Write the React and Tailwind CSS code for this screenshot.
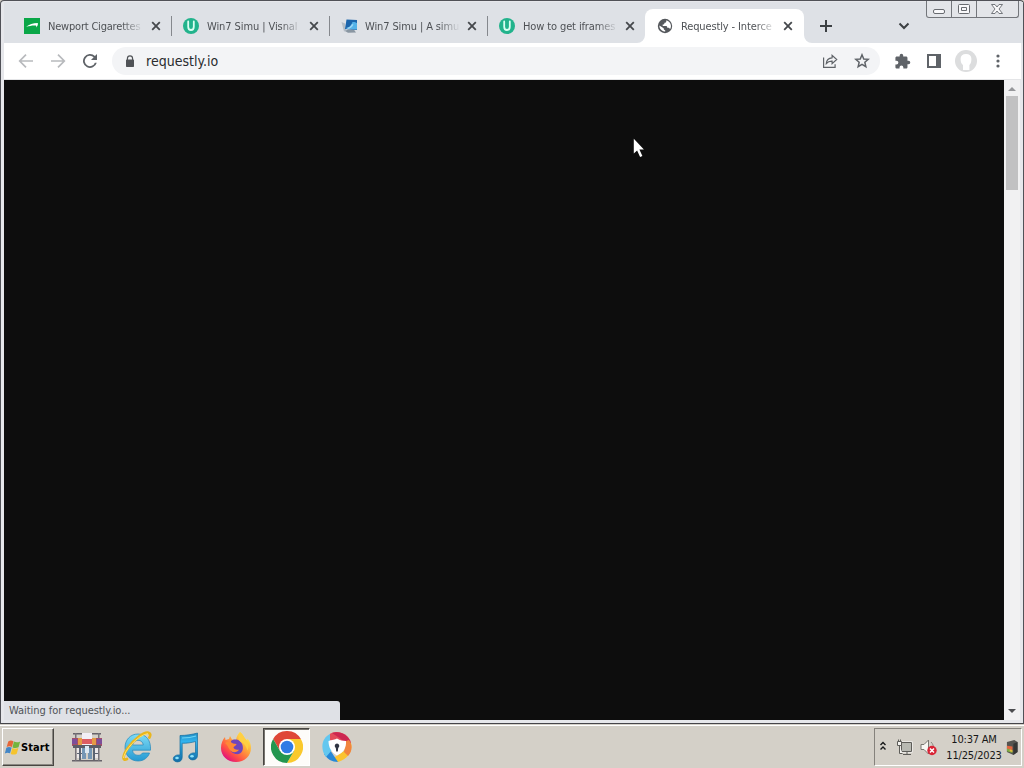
import React from 'react';

const tabs = [
  { title: 'Newport Cigarettes', icon: NewportIcon, tracking: 'tracking-[-0.2px]' },
  { title: 'Win7 Simu | Visnal', icon: UptodownIcon, tracking: 'tracking-[-0.09px]' },
  { title: 'Win7 Simu | A simu', icon: SimuIcon, tracking: 'tracking-[-0.12px]' },
  { title: 'How to get iframes', icon: UptodownIcon, tracking: 'tracking-[-0.12px]' },
  { title: 'Requestly - Interce', icon: GlobeIcon, tracking: 'tracking-[-0.13px]', active: true },
];

function NewportIcon() {
  return (
    <svg width="16" height="16" viewBox="0 0 16 16">
      <path fill="#0aa748" d="M0 0h16v16H0z" />
      <path fill="#fff" d="M2.200 8.800C5 6.600 9 5.100 13.800 5.100c.3 1.300-.1 3-1.600 4.300.2-1.300.1-1.900-.7-1.900C8.500 7.200 5.500 8 2.200 8.800z" />
    </svg>
  );
}

function UptodownIcon() {
  return (
    <svg width="16" height="16" viewBox="0 0 16 16">
      <circle cx="8" cy="8" r="8" fill="#22b38c" />
      <path d="M5.200 3.500v5.200a2.800 3.300 0 0 0 5.600 0V3.500" fill="none" stroke="#d9fff2" strokeWidth="1.800" strokeLinecap="round" />
    </svg>
  );
}

function SimuIcon() {
  return (
    <svg width="16" height="16" viewBox="0 0 16 16">
      <path fill="#b4bdc6" d="M.5 4l3.500 1.500L5.500 13l-2.500.5z" />
      <path fill="#8996a2" d="M7 11.500l6 .2 2 2.800-8 .2-3-1.700z" />
      <path fill="#1b65ac" d="M5.500 1.500L16 2v10L4 11z" />
      <path fill="#54b2e8" d="M11.500 4c2-.3 3 .3 4.500 1v6.500L5 10.500c3-.5 5-2.500 6.500-6.500z" />
      <path fill="#9bd7f5" d="M5 10c3-.3 4.800-2 6-4l1.500.5c-1.200 2.500-3 4-5 4.400z" />
    </svg>
  );
}

function GlobeIcon() {
  return (
    <svg width="16" height="16" viewBox="0 0 16 16">
      <circle cx="8" cy="8" r="7.200" fill="#55585c" />
      <path fill="#fff" d="M9 2.500c.8 1.500-.3 2-1.500 2.200-.2 1.500-.5 1.700-1.800 1.800v1.400h3.600c.8.200 1 .9.900 1.800h1.400c.9.200 1.100.8 1.400 1.500A5.600 5.600 0 0 0 9 2.500zM2.400 7.500c-.2 3.500 2.600 6.100 5.800 6.100v-1.400c-1.300-.2-1.600-.8-1.500-2z" />
    </svg>
  );
}

function CloseIcon() {
  return (
    <svg width="10" height="10" viewBox="0 0 10 10">
      <path d="M1.200 1.200l7.600 7.600M8.800 1.200L1.200 8.800" stroke="#45484c" strokeWidth="1.800" />
    </svg>
  );
}

function Tab({ title, icon: Icon, tracking, active, divider, first }) {
  return (
    <div className={`relative flex h-[34px] shrink-0 items-center ${first ? 'pl-[11px]' : 'pl-3'} ${active ? 'w-[159px] rounded-t-lg bg-white' : 'w-[158px]'}`}>
      <Icon />
      <div className={`ml-2 mt-[2px] h-[18px] w-[94px] shrink-0 whitespace-nowrap text-[11px] leading-[18px] text-[#4e5155] ${tracking} [mask-image:linear-gradient(to_right,black_74px,transparent_95px)]`}>
        {title}
      </div>
      <div className={first ? 'ml-[9px]' : 'ml-2'}><CloseIcon /></div>
      {divider && <div className="absolute -right-px top-[7px] h-5 w-px bg-[#85888d]" />}
      {active && (
        <>
          <svg className="absolute bottom-0 -left-2" width="8" height="8"><path d="M8 0v8H0a8 8 0 0 0 8-8z" fill="#fff" /></svg>
          <svg className="absolute bottom-0 -right-2" width="8" height="8"><path d="M0 0v8h8a8 8 0 0 1-8-8z" fill="#fff" /></svg>
        </>
      )}
    </div>
  );
}

function WindowControls() {
  return (
    <div className="absolute right-[4px] top-0 flex h-[17px] w-[93px] rounded-b-[3px] border border-t-0 border-[#73767b] bg-[#e3e5e9] text-[#686b70]">
      <div className="w-[25px] border-r border-[#73767b]">
        <svg width="25" height="16" fill="none" stroke="currentColor"><rect x="6.500" y="8.500" width="11" height="4" rx="1.500" fill="#f8f8fa" /></svg>
      </div>
      <div className="w-[25px] border-r border-[#73767b]">
        <svg width="25" height="16" fill="none" stroke="currentColor"><rect x="6.500" y="3.500" width="11" height="9" rx="1" fill="#f8f8fa" /><path d="M9.500 6.500h5v3h-5z" /></svg>
      </div>
      <svg width="41" height="16" fill="none" stroke="currentColor"><path d="M14.500 3.500h3.500l2 2.500 2-2.500h3.500l-3.500 4.500 3.500 4.500H22l-2-2.500-2 2.500h-3.500L18 8z" fill="#f8f8fa" strokeWidth="0.900" /></svg>
    </div>
  );
}

function TabStrip() {
  return (
    <div className="flex h-[41px] shrink-0 bg-[#dee1e6] pl-[9px] pt-[7px]">
      {tabs.map((tab, i) => <Tab key={i} {...tab} first={i === 0} divider={i < 3} />)}
      <svg width="14" height="14" viewBox="0 0 14 14" className="ml-[15px] mt-[10px]">
        <path d="M7 1v12M1 7h12" stroke="#3c4043" strokeWidth="2" />
      </svg>
      <svg width="12" height="12" viewBox="0 0 12 12" className="ml-[65px] mt-[11px]">
        <path d="M1.500 3.500L6 8l4.500-4.500" fill="none" stroke="#3c4043" strokeWidth="2" />
      </svg>
    </div>
  );
}

function Toolbar() {
  return (
    <div className="flex h-[37px] shrink-0 items-center border-b border-[#e4e5e7] bg-white pl-[14px] text-[#5f6368]">
      <svg width="16" height="16" viewBox="0 0 16 16" fill="none" stroke="#b8babd" strokeWidth="1.700"><path d="M15 8H2M8 1.700L1.700 8 8 14.300" /></svg>
      <svg width="16" height="16" viewBox="0 0 16 16" fill="none" stroke="#b8babd" strokeWidth="1.700" className="ml-4"><path d="M1 8h13M8 1.700L14.300 8 8 14.300" /></svg>
      <svg width="16" height="16" viewBox="0 0 16 16" fill="currentColor" className="ml-4"><path d="M12.950 3.050A7 7 0 1 0 14.760 9.800h-1.900a5.200 5.200 0 1 1-1.190-5.470L9 7h6V1z" /></svg>
      <div className="ml-[14px] flex h-7 w-[768px] items-center rounded-full bg-[#f3f4f6] pl-[14px]">
        <svg width="8" height="12" viewBox="0 0 10 13" preserveAspectRatio="none"><path fill="#505357" d="M1 5V4a4 3.700 0 0 1 8 0v1h.2a.8.800 0 0 1 .8.800v6.400a.8.800 0 0 1-.8.800H.8a.8.800 0 0 1-.8-.8V5.800A.8.800 0 0 1 .8 5zm1.500 0h5V4a2.500 2.300 0 0 0-5 0z" /></svg>
        <span className="ml-3 w-[673px] text-[14px] leading-5 tracking-[0.02px] text-[#292b2e]">requestly.io</span>
        <svg width="16" height="16" viewBox="0 0 16 16" fill="none" stroke="currentColor" strokeWidth="1.200" className="ml-[3px]"><path d="M1.600 4.500v9.900h11.500v-3.200M4.300 10.500c.2-3.500 2.100-5.500 5.800-5.700V2.300l4.600 4.200-4.600 4.200V8.100c-2.500-.1-4.400.7-5.800 2.400z" /></svg>
        <svg width="16" height="16" viewBox="0 0 16 16" fill="none" stroke="currentColor" strokeWidth="1.500" className="ml-4"><path d="M8 1.800l1.750 4.150 4.500.4-3.400 2.950 1 4.400L8 11.350 4.150 13.700l1-4.400-3.400-2.950 4.500-.4z" /></svg>
      </div>
      <svg width="17" height="17" viewBox="0 0 24 24" fill="currentColor" className="ml-[14px]"><path d="M20.500 11H19V7c0-1.100-.9-2-2-2h-4V3.500a2.500 2.500 0 0 0-5 0V5H4c-1.100 0-2 .9-2 2v3.800h1.500a2.700 2.700 0 0 1 0 5.400H2V20c0 1.100.9 2 2 2h3.800v-1.500a2.700 2.700 0 0 1 5.400 0V22H17c1.100 0 2-.9 2-2v-4h1.500a2.500 2.500 0 0 0 0-5z" /></svg>
      <svg width="14" height="14" viewBox="0 0 14 14" className="ml-4"><path fill="currentColor" fillRule="evenodd" d="M0 0h14v14H0zM2 2v10h7V2z" /></svg>
      <svg width="22" height="22" viewBox="0 0 22 22" className="ml-[14px]"><circle cx="11" cy="11" r="11" fill="#dcddde" /><path d="M11 4c3.400 0 5.400 1.800 5.400 4.800 0 3.200-.7 5.200-2 6.200v5H8v-5c-1.600-1-2.400-3-2.400-6.200C5.600 5.800 7.600 4 11 4z" fill="#fff" /></svg>
      <svg width="4" height="14" viewBox="0 0 4 14" fill="currentColor" className="ml-[19px]"><circle cx="2" cy="2" r="1.600" /><circle cx="2" cy="7" r="1.600" /><circle cx="2" cy="12" r="1.600" /></svg>
    </div>
  );
}

function Page() {
  return (
    <div className="flex h-[640px] shrink-0">
      <div className="relative flex w-[1000px] items-end bg-[#0d0d0d]">
        <div className="flex h-[19px] w-[336px] items-center rounded-tr-[3px] bg-[#dfe1e6] pl-[5px] pt-[2px] text-[11px] tracking-[-0.05px] text-[#505357]">
          Waiting for requestly.io...
        </div>
        <svg width="13" height="21" viewBox="0 0 13 21" className="absolute left-[629px] top-[58px]">
          <path fill="#fff" d="M.8.800v14.700l3.300-3.100 3 6.600 2.300-1-3-6.400h4.500z" />
        </svg>
      </div>
      <div className="flex w-4 flex-col items-center bg-[#f1f1f2]">
        <svg width="16" height="16"><path d="M4 11l4-4 4 4z" fill="#96979a" /></svg>
        <div className="h-[94px] w-3 bg-[#c1c1c2]" />
        <svg width="16" height="16" className="mt-auto"><path d="M4 5h8l-4 4z" fill="#4c4d50" /></svg>
      </div>
    </div>
  );
}

function StartButton() {
  return (
    <button className="flex h-[38px] w-[52px] items-center border border-b-[#484642] border-l-white border-r-[#484642] border-t-white bg-[#d4d0c8] pl-px shadow-[inset_-1px_-1px_#8b8882]">
      <svg width="17" height="17" viewBox="0 0 16 16">
        <path fill="#e56638" d="M4 2.300C5.700 1 7.300 1.200 8.900 2.100L7.500 7.500C5.800 6.600 4.300 6.500 2.500 7.600z" />
        <path fill="#73b43d" d="M9.300 2.400c2 .9 3.600 1 5.900-.1l-1.500 5.500c-2 1-3.700 1-5.700.1z" />
        <path fill="#4386c6" d="M2.200 8.200c1.800-1 3.300-.9 5-.1l-1.500 5.400C4 12.700 2.600 12.500.8 13.600z" />
        <path fill="#f5c42e" d="M7.800 8.500c2 .9 3.600.9 5.700-.1L12 13.900c-2 1.100-3.700 1-5.700.1z" />
      </svg>
      <span className="mt-[2px] text-[11px] font-bold tracking-[0.1px] text-black">Start</span>
    </button>
  );
}

function MarketIcon() {
  return (
    <svg width="32" height="32" viewBox="0 0 32 32">
      <path fill="#67636a" d="M2 2h28v1.500H2zM1 29h30v1.500H1z" />
      <path fill="#77737a" d="M4 2h1.500v28H4zM27 2h1.500v28H27z" />
      <path fill="#a34e68" d="M1 7h10v8H1zM21 7h10v8H21z" />
      <path fill="#7d4e9a" d="M1 8h5v5H1zM26 8h5v5h-5z" />
      <path fill="#e49a46" d="M7 7h4v7H7zM21 7h4v7h-4z" />
      <path fill="#f2eff6" d="M11 2h10v12H11z" />
      <path fill="#dc5c63" d="M11 8h10v5H11z" />
      <path fill="#5b5c68" d="M2 14h28v3H2z" />
      <path fill="#ece8e9" d="M6 17h5v10H6zM22 17h5v10h-5z" />
      <path fill="#7596b5" d="M11 17h4v11h-4zM17 17h4v11h-4z" />
      <path fill="#dce8f3" d="M14 15h4v7h-4z" />
      <path fill="#5c6472" d="M8 17h2v12H8zM22 17h2v12h-2zM6 22h5v1H6zM22 22h5v1h-5z" />
    </svg>
  );
}

function ExplorerIcon() {
  return (
    <svg width="32" height="32" viewBox="0 0 32 32">
      <defs>
        <linearGradient id="ie" x2="0" y2="1"><stop stopColor="#7edcf6" /><stop offset="1" stopColor="#2599d2" /></linearGradient>
      </defs>
      <path fill="url(#ie)" stroke="#2388bc" strokeWidth=".7" d="M17 3C9.500 3 4 8.800 4 16.500S9.500 30 17 30c5.700 0 10-3.300 11.500-8h-7c-.9 1.600-2.500 2.300-4.500 2.300-3.200 0-5.300-2-5.500-5.100h18C30.200 9.700 25.300 3 17 3zm-5.400 11c.5-2.900 2.600-4.700 5.400-4.700s4.900 1.700 5.300 4.700z" />
      <path fill="none" stroke="#e9b61d" strokeWidth="2.700" strokeLinecap="round" d="M6 28c-5 2.500-4.500-3 .5-10.500C13 8 24-.5 28.500 2.300c1 .8.700 2.800-.1 4.200" />
      <path fill="none" stroke="#ffe36a" strokeWidth="1" d="M2.600 27C3 20 16 4.500 27 2.500" />
    </svg>
  );
}

function MusicIcon() {
  return (
    <svg width="28" height="32" viewBox="0 0 28 32">
      <defs>
        <linearGradient id="note" x2="0" y2="1"><stop stopColor="#248dc2" /><stop offset=".3" stopColor="#32b4ef" /><stop offset="1" stopColor="#126ba5" /></linearGradient>
      </defs>
      <path fill="url(#note)" stroke="#166e9f" strokeWidth=".7" d="M8 4.500C14 4.500 20 3.500 25.500 2v22.200c0 3-2 4.700-4.800 4.700-2.300 0-4-1.300-4-3.200 0-2.500 3.200-4.300 6.800-3.700V10.500c-4.300 1.200-8.500 1.800-13.300 1.800v13.900c0 3-2 4.700-4.700 4.700-2.400 0-4.200-1.300-4.200-3.200 0-2.500 3.100-4.300 6.700-3.700z" />
      <path d="M10 7c5 0 10-.6 14-2" stroke="#70d5f4" strokeWidth="1.200" fill="none" />
      <ellipse cx="5" cy="27" rx="1.800" ry="1.200" fill="#8be3fb" /><ellipse cx="20" cy="25.200" rx="1.800" ry="1.200" fill="#8be3fb" />
    </svg>
  );
}

function FirefoxIcon() {
  return (
    <svg width="32" height="32" viewBox="0 0 32 32">
      <defs>
        <linearGradient id="fox" x1=".85" y1=".1" x2=".2" y2=".9"><stop stopColor="#fff04c" /><stop offset=".4" stopColor="#ffa03b" /><stop offset=".75" stopColor="#ff5045" /><stop offset="1" stopColor="#e31578" /></linearGradient>
      </defs>
      <path fill="url(#fox)" d="M20 1c2.500 2 3.500 4 5 6.500 1 .7 1.500 1.200 2 2l.5-2C30 10.500 31 13.500 31 17c0 8-6.500 14-15 14S1 25 1 17c0-4.500 1.500-8 4-11l.5 3L9 8l1-3 2 3.500 4 .5C16.500 5.500 18 3 20 1z" />
      <path fill="#7046bb" d="M11 10c4-3 10-1 11.500 4 1.700 6-2 10-7 9-4-.8-6-3.500-5-7z" />
      <path fill="#ff8936" d="M5 12c3-2 5.500-1.500 8 .5l3.500.5c0 1.800-2.200 2-3 3.200 0 2 3 3 5.500 2.300-1.500 3-5.700 3.500-8 1.500C8.500 18 8.500 15 5 12z" />
      <path fill="#ffcf42" d="M20 1c2.500 2 3.500 4 5 6.500 3 3 4.500 7.500 2.500 12-1.500-4.500-3-7-6.500-8.500-3-2-3-6-1-10z" />
    </svg>
  );
}

function ChromeIcon() {
  return (
    <svg width="32" height="32" viewBox="0 0 32 32">
      <path fill="#df4737" d="M2.140 8A16 16 0 0 1 29.860 8H16l-6.930 12z" />
      <path fill="#fac92c" d="M29.860 8A16 16 0 0 1 16 32l6.930-12L16 8z" />
      <path fill="#23964f" d="M2.140 8A16 16 0 0 0 16 32l6.930-12H9.070z" />
      <circle cx="16" cy="16" r="8" fill="#fff" />
      <circle cx="16" cy="16" r="6.300" fill="#2f7be5" />
    </svg>
  );
}

function LockBrowserIcon() {
  return (
    <svg width="30" height="30" viewBox="0 0 30 30">
      <path fill="#e34b5a" d="M8 1.700A15 15 0 0 1 28.500 9L22 13 7 8z" />
      <path fill="#cc2651" d="M10 1c8-2.500 16 1.500 19 9.500l-3 5L19 7z" />
      <path fill="#fac331" d="M29 11c2 7-2 16-13 19l-6-3 12-8 4-9z" />
      <path fill="#f1843e" d="M27 8c4 5 3 12-1 16l-4-4 2-11z" />
      <path fill="#2588d8" d="M2 22c3 5 8 8 14 8L8 18z" />
      <path fill="#63c7ef" d="M8 2C-.5 6-2 17 4 25l6-7-2-10z" />
      <path fill="#fff" d="M6.500 9C10 8 13 7.500 15 6.500c3 2 6 2.300 9 2.500.5 7-2.500 11.500-9 14.500-5.500-3-8.500-8-8.500-14.500z" />
      <path fill="#303643" d="M15 11.500a2.400 2.400 0 0 0-1.200 4.400l.4 3.600h1.600l.4-3.600a2.400 2.400 0 0 0-1.200-4.400z" />
    </svg>
  );
}

function Tray() {
  return (
    <div className="ml-auto mr-[2px] flex h-[38px] w-[148px] items-center border border-b-white border-l-[#85827c] border-r-white border-t-[#85827c] pl-[4px]">
      <svg width="8" height="10" viewBox="0 0 8 10" fill="none" stroke="#17191a" strokeWidth="1.400" className="mb-[3px]"><path d="M1.500 4L4 1.500 6.500 4M1.500 8.500L4 6l2.500 2.500" /></svg>
      <svg width="17" height="17" viewBox="0 0 17 17" fill="none" className="ml-[9px]">
        <path fill="#fff" d="M4.500 2.500h12v11h-12z" />
        <path fill="#b8b9b2" stroke="#5d5c58" d="M5.500 3.500h10v9h-10zM7 15.500h8M11 13v2" />
        <path fill="#f5f4f1" stroke="#5d5c58" d="M1.500 2.500h4v4h-4zM2.500.500v2M4.500.500v2M3.500 6.500v8h3" />
      </svg>
      <svg width="17" height="17" viewBox="0 0 17 17" className="ml-[7px]">
        <path fill="#f7f6f2" stroke="#797771" d="M1 5.500h3L8.500 1v14L4 10.500H1z" />
        <path d="M11 3c2 2 2.500 4 2.500 6" fill="none" stroke="#8b8983" />
        <circle cx="12" cy="11.500" r="4.700" fill="#d82435" />
        <path d="M10 9.500l4 4M14 9.500l-4 4" stroke="#fff" strokeWidth="1.500" />
      </svg>
      <div className="ml-[8px] mt-[2px] w-[58px] shrink-0 text-center text-[11px] leading-4 text-[#171717]">
        <div className="whitespace-nowrap tracking-[-0.2px]">10:37 AM</div>
        <div className="-mx-1 whitespace-nowrap tracking-[-0.15px]">11/25/2023</div>
      </div>
      <svg width="12" height="15" viewBox="0 0 13 16" className="ml-[3px]">
        <path fill="#555450" d="M1 2l8-2 3.500 2v11L8 16l-7-3z" />
        <path fill="#343635" d="M8 4l4.500-2v11L8 16z" />
        <path fill="#e26640" d="M1 6l6 1v4l-6-1z" /><path fill="#7eac42" d="M1 9l6 2v3l-6-2z" />
        <path fill="#e7bd3d" d="M4 10l3 1v2l-3-1z" />
      </svg>
    </div>
  );
}

function Taskbar() {
  return (
    <div className="flex h-11 shrink-0 items-center bg-[#d4d0c8] pl-[2px] pt-[2px] shadow-[inset_0_1px_#d4d0c8,inset_0_2px_white]">
      <StartButton />
      <div className="ml-[17px]"><MarketIcon /></div>
      <div className="ml-[18px]"><ExplorerIcon /></div>
      <div className="ml-[19px]"><MusicIcon /></div>
      <div className="ml-[20px]"><FirefoxIcon /></div>
      <div className="ml-[11px] flex h-[38px] w-[47px] items-center justify-center border border-b-white border-l-[#484642] border-r-white border-t-[#484642] bg-[#fdfcf9] shadow-[inset_1px_1px_#77746e]"><ChromeIcon /></div>
      <div className="ml-[12px]"><LockBrowserIcon /></div>
      <Tray />
    </div>
  );
}

export default function App() {
  return (
    <div className="flex h-[768px] w-[1024px] flex-col overflow-hidden bg-[#d4d0c8] font-['Tahoma','DejaVu_Sans_Condensed','Noto_Sans',sans-serif] [&_svg]:block [&_svg]:shrink-0">
      <div className="relative flex h-[724px] w-[1024px] shrink-0 flex-col rounded-t-[4px] border border-b-[#45454a] border-l-[#505157] border-r-[#505157] border-t-[#505157] bg-[#e6e7eb] pl-[3px] pt-px">
        <TabStrip />
        <div className="w-[1017px]"><Toolbar /></div>
        <Page />
        <WindowControls />
      </div>
      <Taskbar />
    </div>
  );
}
